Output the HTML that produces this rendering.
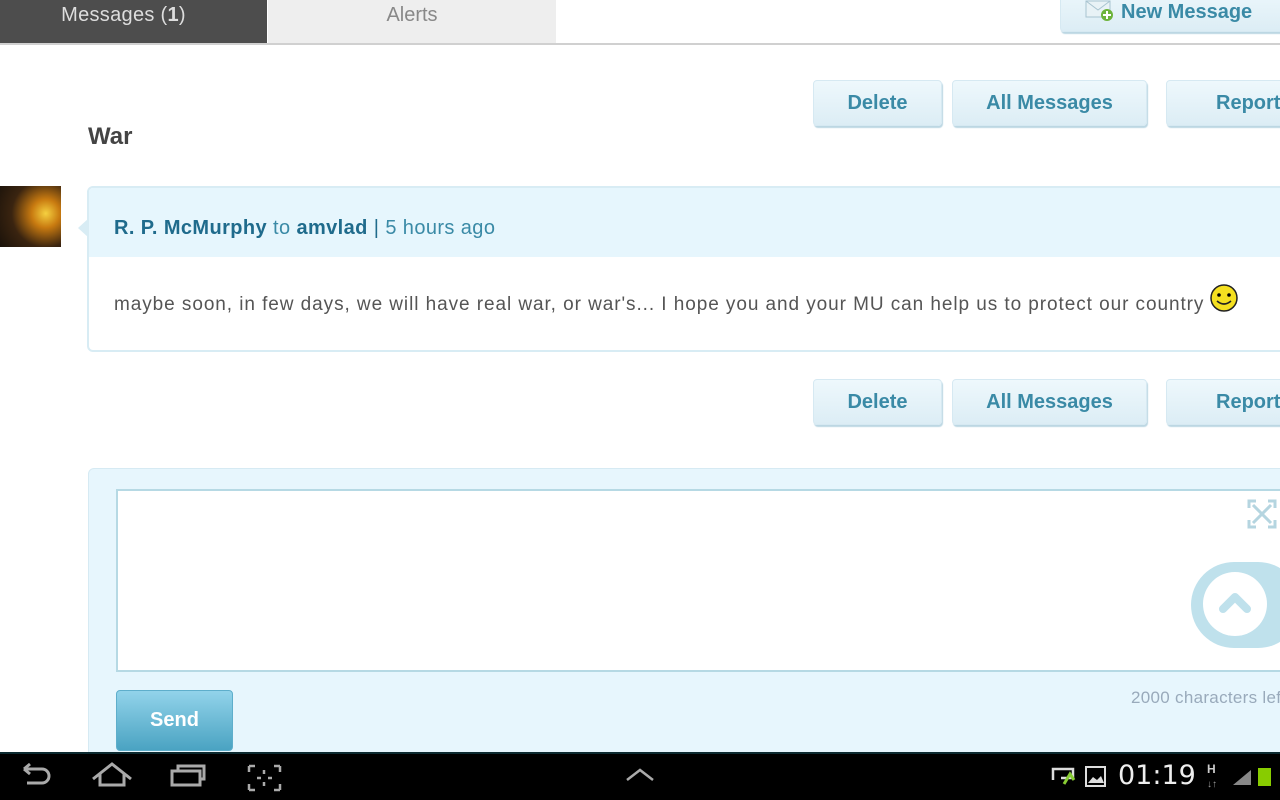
<!DOCTYPE html>
<html><head><meta charset="utf-8"><style>
*{margin:0;padding:0;box-sizing:border-box}
body{width:1280px;height:800px;overflow:hidden;background:#fff;font-family:"Liberation Sans",sans-serif;position:relative}
.a{position:absolute}
.btn{position:absolute;height:46px;border-radius:4px;background:linear-gradient(#eef8fc,#dcedf5);border:1px solid #d6e9f2;box-shadow:1px 2px 1px #bcd7e3;color:#3a8aa6;font-weight:bold;font-size:20px;text-align:center;line-height:44px}
</style></head><body>
<div class="a" style="left:0;top:0;width:267px;height:43px;background:#4d4d4d;color:#ddd;font-size:20px;text-align:center;line-height:31px;letter-spacing:0.3px;padding-right:20px">Messages (<b>1</b>)</div>
<div class="a" style="left:268px;top:0;width:288px;height:43px;background:#eeeeee;color:#888;font-size:20px;text-align:center;line-height:31px">Alerts</div>
<div class="a" style="left:0;top:43px;width:1280px;height:2px;background:#d0d0d0"></div>
<div class="btn" style="left:1060px;top:-14px;width:240px;height:46px;line-height:50px;text-align:left;padding-left:60px">New Message</div>
<svg class="a" style="left:1085px;top:0" width="30" height="22"><rect x="1" y="1" width="24" height="16" fill="#e8f2f6" stroke="#a8c4d0"/><path d="M1 1 L13 10 L25 1" fill="none" stroke="#a8c4d0"/><circle cx="22" cy="15" r="6" fill="#6cb33a"/><path d="M22 11v8M18 15h8" stroke="#fff" stroke-width="2"/></svg>
<div class="btn" style="left:813px;top:80px;width:129px">Delete</div>
<div class="btn" style="left:952px;top:80px;width:195px">All Messages</div>
<div class="btn" style="left:1166px;top:80px;width:130px;text-align:left;padding-left:49px">Report</div>
<div class="a" style="left:88px;top:123px;font-size:24px;font-weight:bold;color:#444">War</div>
<div class="a" style="left:0;top:186px;width:61px;height:61px;background:radial-gradient(circle at 75% 45%,#f5d040 0,#c87a10 25%,#3a2410 60%,#1a120a 100%)"></div>
<div class="a" style="left:87px;top:186px;width:1210px;height:166px;border:2px solid #d8ecf4;border-radius:6px;background:#fff"></div>
<div class="a" style="left:89px;top:188px;width:1200px;height:69px;background:#e6f6fd;border-radius:4px 0 0 0"></div>
<div class="a" style="left:78px;top:218px;width:0;height:0;border-top:10px solid transparent;border-bottom:10px solid transparent;border-right:11px solid #d8ecf4"></div>
<div class="a" style="left:114px;top:217px;font-size:20px;color:#3a8aa6;letter-spacing:0.4px"><b style="color:#1f6b8c">R. P. McMurphy</b> to <b style="color:#1f6b8c">amvlad</b> <span style="color:#1f6b8c">|</span> 5 hours ago</div>
<div class="a" style="left:114px;top:294px;font-size:19px;color:#555;white-space:nowrap;letter-spacing:0.93px">maybe soon, in few days, we will have real war, or war's... I hope you and your MU can help us to protect our country</div>
<svg class="a" style="left:1209px;top:284px" width="30" height="30"><circle cx="15" cy="14" r="13" fill="#f5e020" stroke="#222" stroke-width="1.5"/><circle cx="10" cy="11" r="1.8"/><circle cx="20" cy="11" r="1.8"/><path d="M8 17 Q15 23 22 17" fill="none" stroke="#222" stroke-width="1.6"/></svg>
<div class="btn" style="left:813px;top:379px;width:129px">Delete</div>
<div class="btn" style="left:952px;top:379px;width:195px">All Messages</div>
<div class="btn" style="left:1166px;top:379px;width:130px;text-align:left;padding-left:49px">Report</div>
<div class="a" style="left:88px;top:468px;width:1210px;height:300px;background:#e7f6fd;border:1px solid #d6eaf3;border-radius:6px"></div>
<div class="a" style="left:116px;top:489px;width:1180px;height:183px;background:#fff;border:2px solid #b6d9e4"></div>
<svg class="a" style="left:1247px;top:499px" width="30" height="30" fill="none" stroke="#b5d5e0" stroke-width="3"><path d="M2 9V2h7M21 2h7v7M28 21v7h-7M9 28H2v-7M6 6l18 18M24 6L6 24"/></svg>
<div class="a" style="left:1191px;top:562px;width:110px;height:86px;border-radius:43px;background:#bfe1ec"></div>
<div class="a" style="left:1203px;top:572px;width:64px;height:64px;border-radius:50%;background:#fff"></div>
<svg class="a" style="left:1203px;top:572px" width="64" height="64"><path d="M20 37 L32 25 L44 37" fill="none" stroke="#bfe1ec" stroke-width="8" stroke-linecap="round" stroke-linejoin="round"/></svg>
<div class="a" style="left:1131px;top:688px;font-size:17px;color:#9ab;white-space:nowrap;letter-spacing:0.3px">2000 characters left</div>
<div class="a" style="left:116px;top:690px;width:117px;height:61px;border-radius:4px;background:linear-gradient(#92d3ea,#4aa3c2);border:1px solid #5eaecb;color:#fff;font-weight:bold;font-size:20px;text-align:center;line-height:58px">Send</div>
<div class="a" style="left:0;top:752px;width:1280px;height:48px;background:#000;border-top:2px solid #0c2a30"></div>
<svg class="a" style="left:0;top:752px" width="1280" height="48" fill="none" stroke="#aaa" stroke-width="3">
<path d="M24 17h18a7 7 0 0 1 0 14H27M24 17l6-5M24 17l6 5"/>
<path d="M93 27L112 12L131 27M100 22v11h24V22"/>
<path d="M172 19h28v14h-28zM178 19v-5h26v13h-4"/>
<path d="M249 14h6M249 14v6M280 14h-6M280 14v6M249 38h6M249 38v-6M280 38h-6M280 38v-6M264 18v4M264 30v4M257 26h4M268 26h4" stroke-width="2.5"/>
<path d="M627 28l13-10 13 10" stroke-width="2.5"/>
<path d="M1053 28v-11h20v9h-12" stroke="#ddd" stroke-width="2.5"/><path d="M1064 32l6-10 4 6" stroke="#8c3" stroke-width="3"/>
<rect x="1086" y="15" width="19" height="19" stroke="#ddd" stroke-width="2"/><path d="M1088 31l5-6 4 3 4-4 3 7z" fill="#ddd" stroke="none"/>
<path d="M1233 33l18-15v15z" fill="#888" stroke="none"/>
<rect x="1258" y="16" width="13" height="18" fill="#8c0" stroke="none"/>
</svg>
<div class="a" style="left:1118px;top:760px;color:#eee;font-size:27px;font-family:'DejaVu Sans',sans-serif">01:19</div>
<div class="a" style="left:1207px;top:762px;color:#ccc;font-size:12px;font-weight:bold">H<br><span style="font-size:10px;color:#999">↓↑</span></div>
</body></html>
